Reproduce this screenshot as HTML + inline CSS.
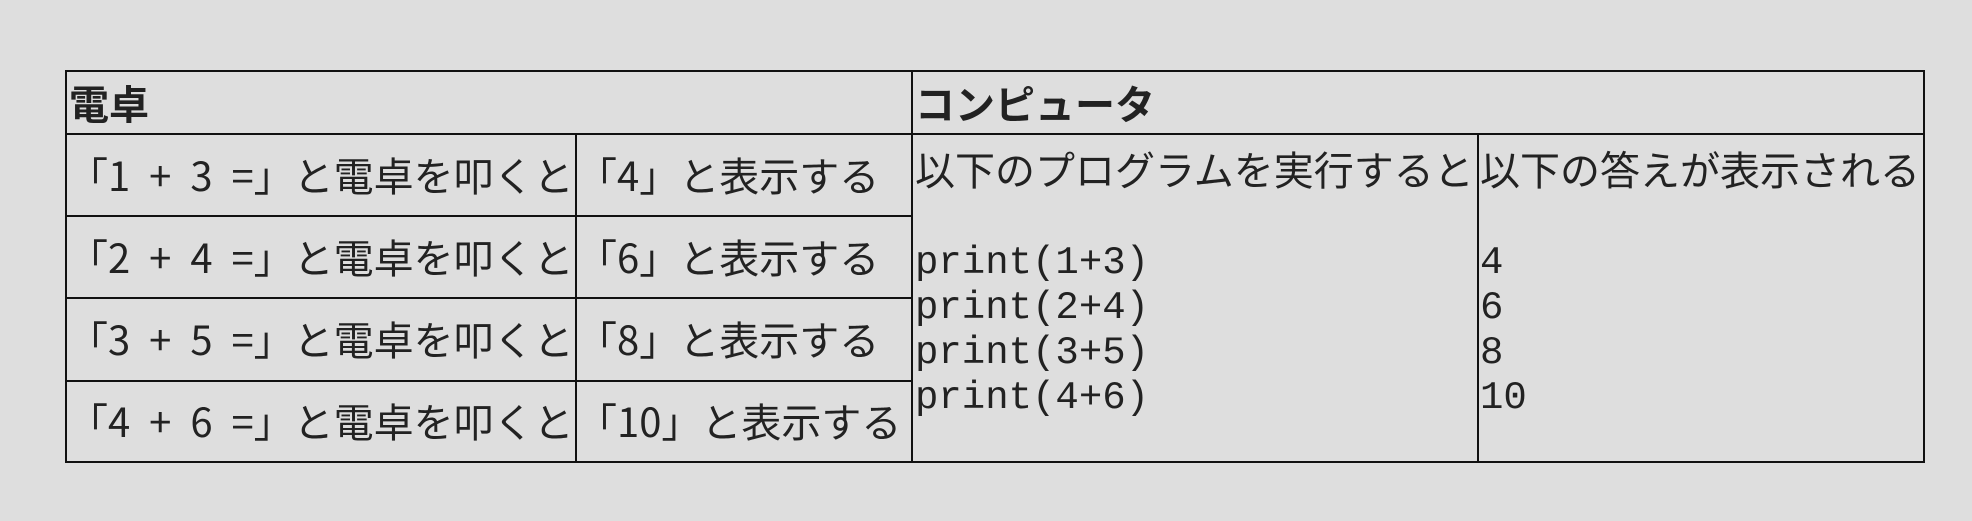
<!DOCTYPE html>
<html><head><meta charset="utf-8"><style>
html,body{margin:0;padding:0;background:#dedede;width:1972px;height:521px;overflow:hidden;}
body{position:relative;font-family:"Liberation Sans","Noto Sans CJK JP",sans-serif;color:#222;}
.l{position:absolute;background:#111;}
.t{position:absolute;font-family:"Noto Sans CJK JP",sans-serif;font-size:40px;white-space:pre;line-height:1;}
.w{word-spacing:10px;}
.b{font-weight:bold;}
.m{position:absolute;font-family:"Liberation Mono",monospace;font-size:39px;line-height:45px;white-space:pre;}
</style></head><body>
<div class="l" style="left:65px;top:70px;width:1860px;height:2px"></div>
<div class="l" style="left:65px;top:133px;width:1860px;height:2px"></div>
<div class="l" style="left:65px;top:215px;width:847px;height:2px"></div>
<div class="l" style="left:65px;top:297px;width:847px;height:2px"></div>
<div class="l" style="left:65px;top:380px;width:847px;height:2px"></div>
<div class="l" style="left:65px;top:461px;width:1860px;height:2px"></div>
<div class="l" style="left:65px;top:70px;width:2px;height:393px"></div>
<div class="l" style="left:575px;top:134px;width:2px;height:328px"></div>
<div class="l" style="left:911px;top:70px;width:2px;height:393px"></div>
<div class="l" style="left:1477px;top:134px;width:2px;height:328px"></div>
<div class="l" style="left:1923px;top:70px;width:2px;height:393px"></div>

<div class="t b" style="left:69px;top:82px">電卓</div>
<div class="t b" style="left:915px;top:82px">コンピュータ</div>

<div class="t w" style="left:68px;top:154px">「1 + 3 =」と電卓を叩くと</div>
<div class="t" style="left:577px;top:154px">「4」と表示する</div>
<div class="t w" style="left:68px;top:236px">「2 + 4 =」と電卓を叩くと</div>
<div class="t" style="left:577px;top:236px">「6」と表示する</div>
<div class="t w" style="left:68px;top:318px">「3 + 5 =」と電卓を叩くと</div>
<div class="t" style="left:577px;top:318px">「8」と表示する</div>
<div class="t w" style="left:68px;top:400px">「4 + 6 =」と電卓を叩くと</div>
<div class="t" style="left:577px;top:400px">「10」と表示する</div>

<div class="t" style="left:915px;top:148px">以下のプログラムを実行すると</div>
<div class="t" style="left:1480px;top:148px">以下の答えが表示される</div>

<div class="m" style="left:915px;top:241px">print(1+3)
print(2+4)
print(3+5)
print(4+6)</div>
<div class="m" style="left:1480px;top:241px">4
6
8
10</div>
</body></html>
